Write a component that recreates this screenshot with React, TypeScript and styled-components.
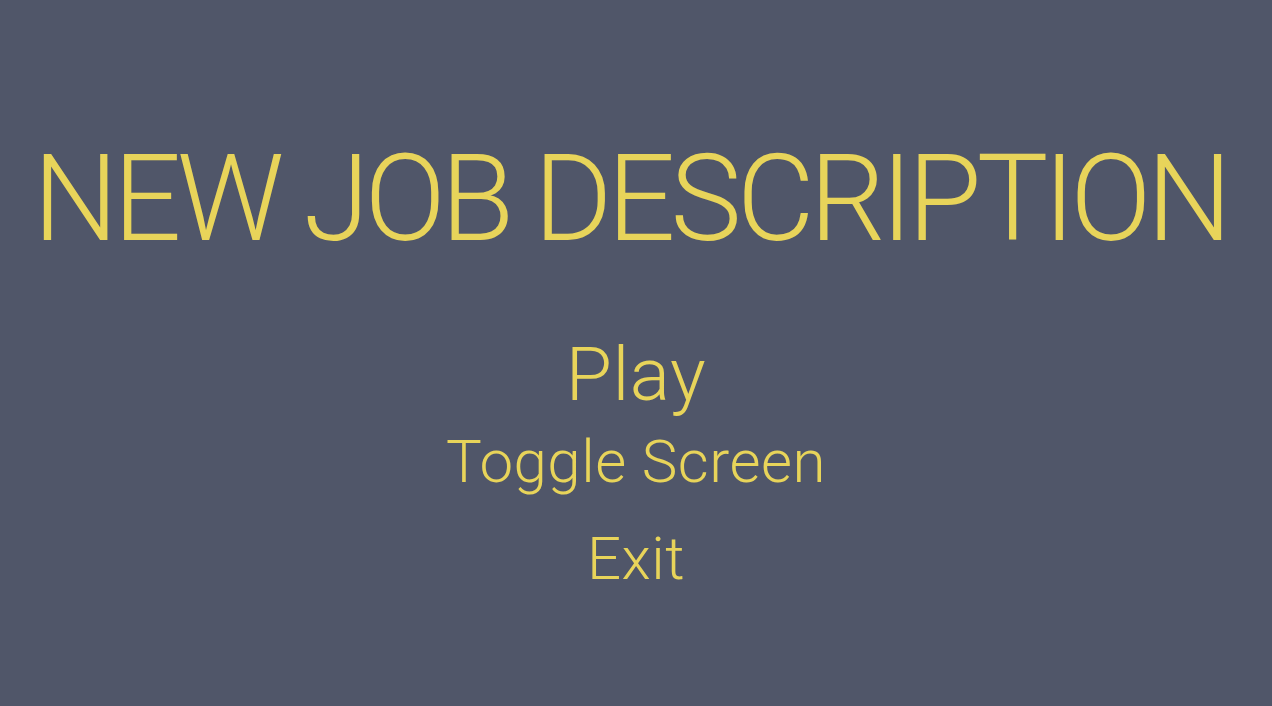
import React from "react";
import styled, { createGlobalStyle } from "styled-components";

const GlobalStyle = createGlobalStyle`
  html, body {
    margin: 0;
    padding: 0;
    background: #505669;
  }
`;

const Screen = styled.main`
  min-height: 100vh;
  display: flex;
  flex-direction: column;
  align-items: center;
  padding-top: 139px;
  box-sizing: border-box;
  background: #505669;
  color: #e8d45a;
  font-family: Roboto, "Liberation Sans", sans-serif;
  font-weight: 300;
`;

const Title = styled.h1`
  margin: 0 12px 0 0;
  font-size: 120px;
  font-weight: 300;
  line-height: 120px;
  letter-spacing: -5px;
  white-space: nowrap;
`;

const Menu = styled.nav`
  margin-top: 77px;
  display: flex;
  flex-direction: column;
  align-items: center;
`;

const MenuItem = styled.button<{ $active?: boolean }>`
  display: block;
  background: none;
  border: none;
  padding: 0;
  color: inherit;
  font-family: inherit;
  font-weight: 300;
  letter-spacing: 0.5px;
  cursor: pointer;
  font-size: ${(p) => (p.$active ? "75px" : "60px")};
  line-height: ${(p) => (p.$active ? "77px" : "97px")};
`;

const items = ["Play", "Toggle Screen", "Exit"];

export default function App() {
  return (
    <>
      <GlobalStyle />
      <Screen>
        <Title>NEW JOB DESCRIPTION</Title>
        <Menu>
          {items.map((label, i) => (
            <MenuItem key={label} $active={i === 0}>
              {label}
            </MenuItem>
          ))}
        </Menu>
      </Screen>
    </>
  );
}
